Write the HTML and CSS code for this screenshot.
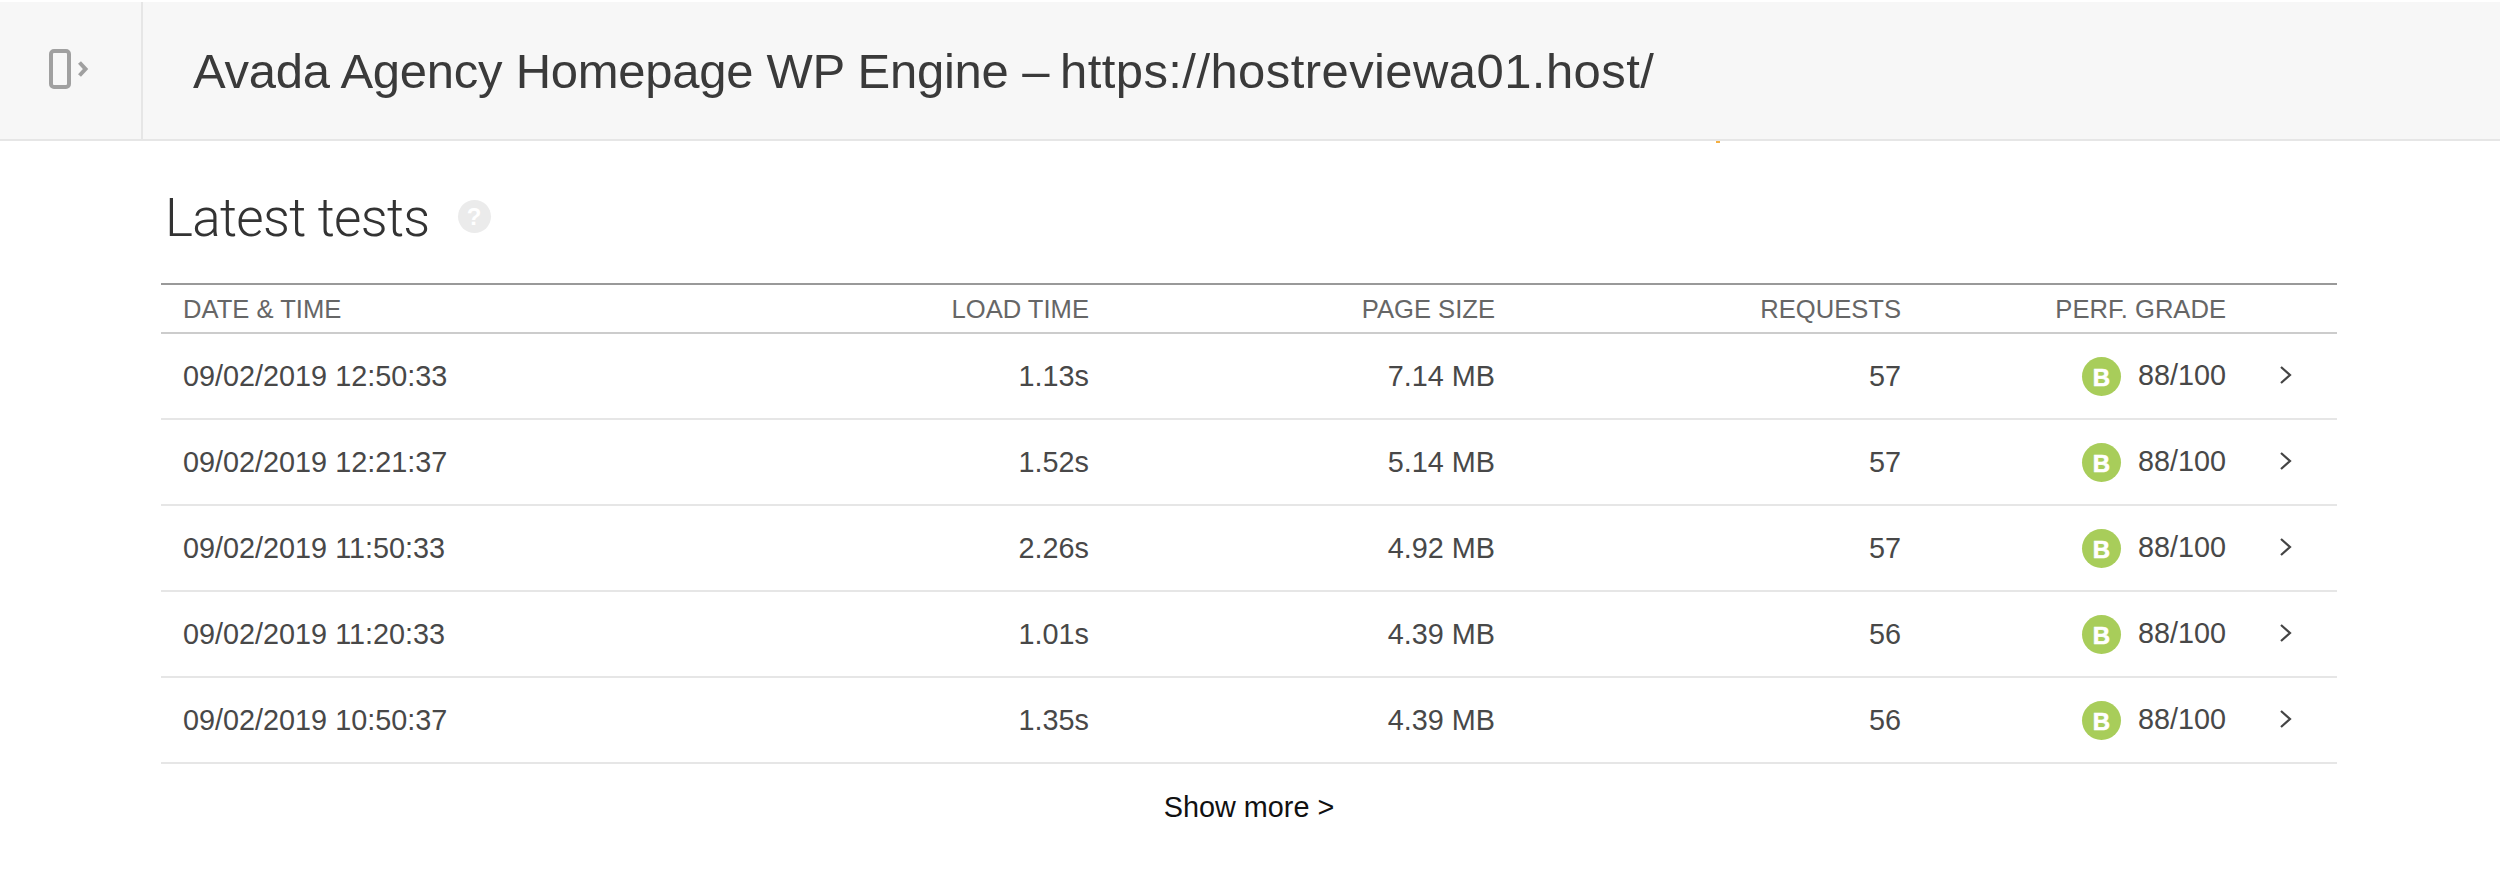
FILE: index.html
```html
<!DOCTYPE html>
<html lang="en">
<head>
<meta charset="utf-8">
<title>Latest tests</title>
<link rel="stylesheet" href="styles.css">
</head>
<body>
<header class="topbar">
  <div class="toggle">
    <svg class="toggle-icon" width="40" height="40" viewBox="0 0 40 40" fill="none">
      <rect x="2" y="2" width="18" height="36" rx="3" stroke="#a0a0a0" stroke-width="4"/>
      <path d="M30.5 13.5l6 6.5-6 6.5" stroke="#a0a0a0" stroke-width="4"/>
    </svg>
  </div>
  <h1 class="page-title"><span class="title-name">Avada Agency Homepage WP Engine</span> – <span class="title-url">https://hostreviewa01.host/</span></h1>
  <span class="progress-tick"></span>
</header>
<main class="content">
  <div class="heading">
    <h2 class="heading-text">Latest tests</h2>
    <span class="help">?</span>
  </div>
  <div class="table">
    <div class="row head">
      <span>DATE &amp; TIME</span><span class="num">LOAD TIME</span><span class="num">PAGE SIZE</span><span class="num">REQUESTS</span><span class="num">PERF. GRADE</span><span></span>
    </div>
    <div class="row">
      <span>09/02/2019 12:50:33</span><span class="num">1.13s</span><span class="num">7.14 MB</span><span class="num">57</span>
      <span class="grade"><i class="badge">B</i>88/100</span>
      <svg class="chev" width="14" height="20" viewBox="0 0 14 20" fill="none"><path d="M2 2l9 8-9 8" stroke="#444" stroke-width="2.2"/></svg>
    </div>
    <div class="row">
      <span>09/02/2019 12:21:37</span><span class="num">1.52s</span><span class="num">5.14 MB</span><span class="num">57</span>
      <span class="grade"><i class="badge">B</i>88/100</span>
      <svg class="chev" width="14" height="20" viewBox="0 0 14 20" fill="none"><path d="M2 2l9 8-9 8" stroke="#444" stroke-width="2.2"/></svg>
    </div>
    <div class="row">
      <span>09/02/2019 11:50:33</span><span class="num">2.26s</span><span class="num">4.92 MB</span><span class="num">57</span>
      <span class="grade"><i class="badge">B</i>88/100</span>
      <svg class="chev" width="14" height="20" viewBox="0 0 14 20" fill="none"><path d="M2 2l9 8-9 8" stroke="#444" stroke-width="2.2"/></svg>
    </div>
    <div class="row">
      <span>09/02/2019 11:20:33</span><span class="num">1.01s</span><span class="num">4.39 MB</span><span class="num">56</span>
      <span class="grade"><i class="badge">B</i>88/100</span>
      <svg class="chev" width="14" height="20" viewBox="0 0 14 20" fill="none"><path d="M2 2l9 8-9 8" stroke="#444" stroke-width="2.2"/></svg>
    </div>
    <div class="row">
      <span>09/02/2019 10:50:37</span><span class="num">1.35s</span><span class="num">4.39 MB</span><span class="num">56</span>
      <span class="grade"><i class="badge">B</i>88/100</span>
      <svg class="chev" width="14" height="20" viewBox="0 0 14 20" fill="none"><path d="M2 2l9 8-9 8" stroke="#444" stroke-width="2.2"/></svg>
    </div>
  </div>
  <div class="more">Show more &gt;</div>
</main>
</body>
</html>
```
FILE: styles.css
```css
* { box-sizing: border-box; }
html, body { margin: 0; padding: 0; background: #fff; }
body {
  height: 870px;
  overflow: hidden;
  padding-top: 2px;
  font-family: "Liberation Sans", Arial, sans-serif;
  color: #484848;
}
.topbar {
  position: relative;
  display: flex;
  align-items: center;
  height: 139px;
  background: #f7f7f7;
  border-bottom: 2px solid #e6e6e6;
}
.toggle {
  width: 143px;
  height: 100%;
  flex: none;
  display: flex;
  align-items: center;
  justify-content: center;
  border-right: 2px solid #e6e6e6;
}
.toggle-icon { display: block; margin: 0 3px 3px 0; }
.page-title {
  margin: 0 0 0 50px;
  font-size: 49px;
  font-weight: 400;
  color: #3a3a3a;
  white-space: nowrap;
}
.title-name { letter-spacing: -0.26px; }
.title-url { letter-spacing: 0.42px; margin-left: -3px; }
.progress-tick {
  position: absolute;
  left: 1716px;
  bottom: -4px;
  width: 4px;
  height: 2px;
  background: #f5b042;
}
.content { padding: 0 163px 0 161px; }
.heading {
  display: flex;
  align-items: center;
  height: 142px;
  padding: 11px 0 0 4px;
}
.heading-text {
  margin: 0;
  font-family: Roboto, "Liberation Sans", sans-serif;
  font-size: 53px;
  font-weight: 300;
  color: #333;
  letter-spacing: -0.7px;
}
.help {
  width: 33px;
  height: 33px;
  margin: -2px 0 0 28px;
  border-radius: 50%;
  background: #ebebeb;
  color: #fff;
  font-size: 24px;
  font-weight: 700;
  line-height: 33px;
  text-align: center;
}
.table { border-top: 2px solid #999; }
.row {
  display: grid;
  grid-template-columns: 500px 406px 406px 406px 325px 1fr;
  align-items: center;
  height: 86px;
  padding-left: 22px;
  border-bottom: 2px solid #e6e6e6;
  font-size: 28.8px;
  color: #484848;
}
.row.head {
  height: 49px;
  padding-top: 1px;
  border-bottom-color: #ccc;
  font-size: 25.6px;
  color: #666;
}
.num { text-align: right; }
.grade {
  display: flex;
  align-items: center;
  justify-content: flex-end;
  padding-bottom: 2px;
}
.badge {
  width: 39px;
  height: 39px;
  margin: 2px 17px 0 0;
  border-radius: 50%;
  background: #a8cd5a;
  color: #fff;
  font-size: 24px;
  font-style: normal;
  font-weight: 700;
  line-height: 41px;
  text-align: center;
  -webkit-text-stroke: 0.6px #fff;
}
.chev { margin: 0 0 3px 53px; }
.more {
  padding-top: 27px;
  text-align: center;
  font-size: 28.8px;
  color: #111;
}
```
